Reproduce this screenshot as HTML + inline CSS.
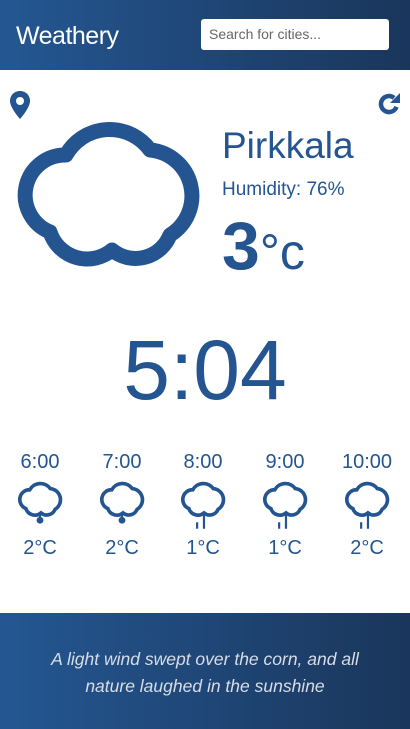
<!DOCTYPE html>
<html><head><meta charset="utf-8"><style>
*{margin:0;padding:0;box-sizing:border-box}
body{width:410px;height:729px;position:relative;background:#fff;font-family:"Liberation Sans",sans-serif;color:#245591;overflow:hidden}
.hdr{position:absolute;left:0;top:0;width:410px;height:70px;background:linear-gradient(90deg,#245792,#1a365b)}
.hdr .t{position:absolute;left:16px;top:22px;font-size:25px;color:#fff;letter-spacing:-0.5px}
.hdr .s{position:absolute;left:201px;top:19px;width:188px;height:31px;background:#fff;border-radius:3px;font-size:14px;color:#666;padding:7px 8px}
.a{position:absolute;white-space:nowrap}
.ft{position:absolute;left:0;top:613px;width:410px;height:116px;background:linear-gradient(90deg,#245792,#1a365b);color:#d8dde6;font-style:italic;font-size:17.5px;text-align:center;line-height:27px;padding-top:33px}
.col{position:absolute;width:80px;text-align:center;font-size:20px}
</style></head><body>
<div class="hdr"><div class="t">Weathery</div><div class="s">Search for cities...</div></div>
<svg class="a" style="left:8px;top:90px" width="24" height="30" viewBox="0 0 24 30"><path d="M12 1C6 1 2 5.5 2 11c0 7 10 18 10 18s10-11 10-18C22 5.5 18 1 12 1z" fill="#245591"/><circle cx="12" cy="11" r="4" fill="#fff"/></svg>
<svg class="a" style="left:376px;top:91px" width="26" height="26" viewBox="0 0 26 26"><path d="M18.1 6.9A8 8 0 1 0 20.5 15.7" fill="none" stroke="#245591" stroke-width="4.5"/><path d="M24 2V12H14z" fill="#245591"/></svg>
<svg class="a" style="left:0;top:0" width="220" height="290" viewBox="0 0 220 290"><path d="M50 232A40 40 0 0 1 66 155A50 50 0 0 1 150 150A46 46 0 0 1 170 235A37 37 0 0 1 112 250A39 39 0 0 1 50 232Z" fill="none" stroke="#245591" stroke-width="15" stroke-linejoin="round"/></svg>
<div class="a" style="left:222px;top:125px;font-size:37px">Pirkkala</div>
<div class="a" style="left:222px;top:179px;font-size:19px">Humidity: 76%</div>
<div class="a" style="left:222px;top:208px;font-size:68px;font-weight:bold;line-height:76px">3<span style="font-size:50px;font-weight:normal">°c</span></div>
<div class="a" style="left:0;width:410px;text-align:center;top:320px;font-size:84px;line-height:100px">5:04</div>

<div class="col" style="left:0;top:451px">6:00</div>
<div class="col" style="left:82px;top:451px">7:00</div>
<div class="col" style="left:163px;top:451px">8:00</div>
<div class="col" style="left:245px;top:451px">9:00</div>
<div class="col" style="left:327px;top:451px">10:00</div>

<svg class="a" style="left:16px;top:480px" width="48" height="50" viewBox="10 115 196 205"><path d="M50 232A40 40 0 0 1 66 155A50 50 0 0 1 150 150A46 46 0 0 1 170 235A37 37 0 0 1 112 250A39 39 0 0 1 50 232Z" fill="none" stroke="#245591" stroke-width="15"/><circle cx="108" cy="280" r="14" fill="#245591"/><path d="M108 250v24" stroke="#245591" stroke-width="9"/></svg>
<svg class="a" style="left:98px;top:480px" width="48" height="50" viewBox="10 115 196 205"><path d="M50 232A40 40 0 0 1 66 155A50 50 0 0 1 150 150A46 46 0 0 1 170 235A37 37 0 0 1 112 250A39 39 0 0 1 50 232Z" fill="none" stroke="#245591" stroke-width="15"/><circle cx="108" cy="280" r="14" fill="#245591"/><path d="M108 250v24" stroke="#245591" stroke-width="9"/></svg>
<svg class="a" style="left:179px;top:480px" width="48" height="50" viewBox="10 115 196 205"><path d="M50 232A40 40 0 0 1 66 155A50 50 0 0 1 150 150A46 46 0 0 1 170 235A37 37 0 0 1 112 250A39 39 0 0 1 50 232Z" fill="none" stroke="#245591" stroke-width="15"/><path d="M112 245v70M84 288v27" stroke="#245591" stroke-width="9"/></svg>
<svg class="a" style="left:261px;top:480px" width="48" height="50" viewBox="10 115 196 205"><path d="M50 232A40 40 0 0 1 66 155A50 50 0 0 1 150 150A46 46 0 0 1 170 235A37 37 0 0 1 112 250A39 39 0 0 1 50 232Z" fill="none" stroke="#245591" stroke-width="15"/><path d="M112 245v70M84 288v27" stroke="#245591" stroke-width="9"/></svg>
<svg class="a" style="left:343px;top:480px" width="48" height="50" viewBox="10 115 196 205"><path d="M50 232A40 40 0 0 1 66 155A50 50 0 0 1 150 150A46 46 0 0 1 170 235A37 37 0 0 1 112 250A39 39 0 0 1 50 232Z" fill="none" stroke="#245591" stroke-width="15"/><path d="M112 245v70M84 288v27" stroke="#245591" stroke-width="9"/></svg>

<div class="col" style="left:0;top:537px">2°C</div>
<div class="col" style="left:82px;top:537px">2°C</div>
<div class="col" style="left:163px;top:537px">1°C</div>
<div class="col" style="left:245px;top:537px">1°C</div>
<div class="col" style="left:327px;top:537px">2°C</div>

<div class="ft">A light wind swept over the corn, and all<br>nature laughed in the sunshine</div>
</body></html>
